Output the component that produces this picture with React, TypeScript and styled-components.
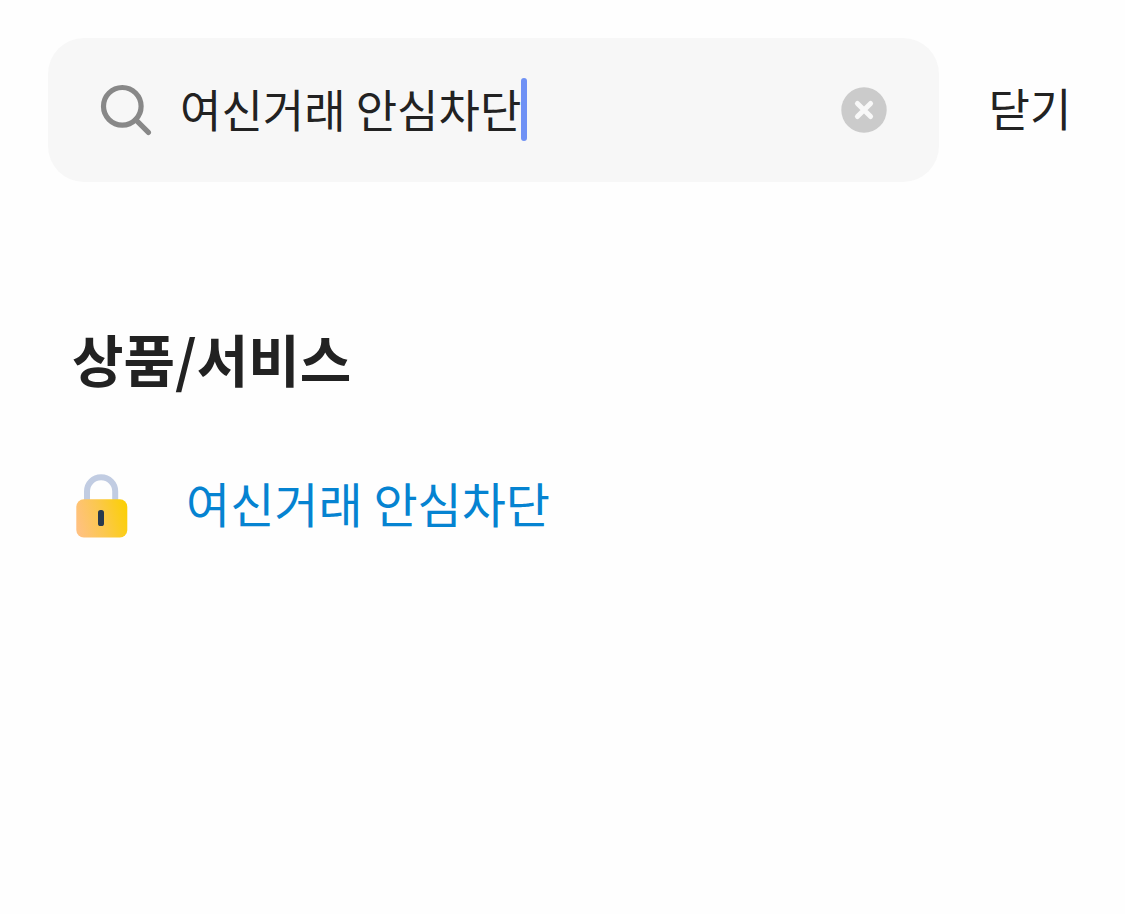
import React, { useRef, useState } from "react";
import styled, { createGlobalStyle } from "styled-components";

const GlobalStyle = createGlobalStyle`
  *, *::before, *::after { box-sizing: border-box; }
  body {
    margin: 0;
    background: #fefefe;
    color: #222;
    font-family: "Noto Sans CJK KR", "Noto Sans", sans-serif;
  }
  button, input { font-family: inherit; color: inherit; }
`;

const Page = styled.div`
  padding: 38px 0 48px 48px;
`;

const SearchBar = styled.form`
  display: flex;
  align-items: center;
`;

const SearchField = styled.div`
  flex: 1;
  min-width: 0;
  display: flex;
  align-items: center;
  height: 144px;
  padding: 0 52px;
  border-radius: 36px;
  background: #f7f7f7;
`;

const Icon = styled.svg`
  display: block;
  flex: none;
`;

const InputArea = styled.label`
  flex: 1;
  min-width: 0;
  display: flex;
  align-items: center;
  padding: 0 0 2px 28px;
`;

const SearchInput = styled.input`
  field-sizing: content;
  min-width: 1px;
  max-width: 100%;
  height: 64px;
  padding: 0 0 2px;
  border: 0;
  outline: 0;
  background: transparent;
  font-size: 45px;
  line-height: 62px;
  caret-color: transparent;
`;

const Caret = styled.span`
  flex: none;
  width: 6px;
  height: 63px;
  border-radius: 3px;
  background: #6f91f5;
`;

const PlainButton = styled.button`
  flex: none;
  padding: 0;
  border: 0;
  background: none;
  cursor: pointer;
`;

const CloseButton = styled(PlainButton)`
  width: 186px;
  height: 64px;
  padding: 0 4px 4px 0;
  font-size: 45px;
  line-height: 60px;
  text-align: center;
`;

const Results = styled.section`
  padding: 136px 24px 0;
`;

const Heading = styled.h2`
  margin: 0;
  font-size: 56px;
  line-height: 80px;
  font-weight: 700;
`;

const ResultList = styled.ul`
  margin: 0;
  padding: 64px 0 0;
  list-style: none;
`;

const ResultLink = styled.a`
  display: flex;
  align-items: center;
  gap: 54px;
  color: #0583d1;
  font-size: 48px;
  line-height: 80px;
  text-decoration: none;
`;

const SearchIcon = () => (
  <Icon width="52" height="52" viewBox="0 0 52 52" fill="none" stroke="#888" strokeWidth="5.2" aria-hidden="true">
    <circle cx="22.3" cy="22.3" r="18.8" />
    <path d="M35.6 35.6 48.4 48.4" strokeLinecap="round" />
  </Icon>
);

const ClearIcon = () => (
  <Icon width="46" height="46" viewBox="0 0 46 46" aria-hidden="true">
    <circle cx="23" cy="23" r="22.7" fill="#cbcbcb" />
    <path d="M16.4 16.4 29.6 29.6M29.6 16.4 16.4 29.6" stroke="#f8f8f8" strokeWidth="5" strokeLinecap="round" />
  </Icon>
);

const LockIcon = () => (
  <Icon width="60" height="72" viewBox="0 -8 60 72" aria-hidden="true">
    <defs>
      <linearGradient id="lock-body" x1="0" y1="0.6" x2="1" y2="0.4">
        <stop offset="0" stopColor="#ffc180" />
        <stop offset="0.5" stopColor="#fbc84c" />
        <stop offset="1" stopColor="#fbcf08" />
      </linearGradient>
    </defs>
    <path d="M15 28V17.3a14.1 14.1 0 0 1 28.2 0V28" fill="none" stroke="#c1cce2" strokeWidth="6" />
    <rect x="4.3" y="25.2" width="51" height="38.3" rx="7.5" fill="url(#lock-body)" />
    <rect x="26" y="36" width="6" height="16" rx="2.6" fill="#273a4e" />
  </Icon>
);

export default function App() {
  const [query, setQuery] = useState("여신거래 안심차단");
  const inputRef = useRef<HTMLInputElement>(null);

  const clear = () => {
    setQuery("");
    inputRef.current?.focus();
  };

  return (
    <>
      <GlobalStyle />
      <Page>
        <SearchBar role="search" onSubmit={(event) => event.preventDefault()}>
          <SearchField>
            <SearchIcon />
            <InputArea>
              <SearchInput
                ref={inputRef}
                type="text"
                aria-label="검색어"
                value={query}
                onChange={(event) => setQuery(event.target.value)}
              />
              <Caret />
            </InputArea>
            <PlainButton type="button" aria-label="지우기" onClick={clear}>
              <ClearIcon />
            </PlainButton>
          </SearchField>
          <CloseButton type="button">닫기</CloseButton>
        </SearchBar>

        <Results>
          <Heading>상품/서비스</Heading>
          <ResultList>
            <li>
              <ResultLink href="#safe-block">
                <LockIcon />
                여신거래 안심차단
              </ResultLink>
            </li>
          </ResultList>
        </Results>
      </Page>
    </>
  );
}
